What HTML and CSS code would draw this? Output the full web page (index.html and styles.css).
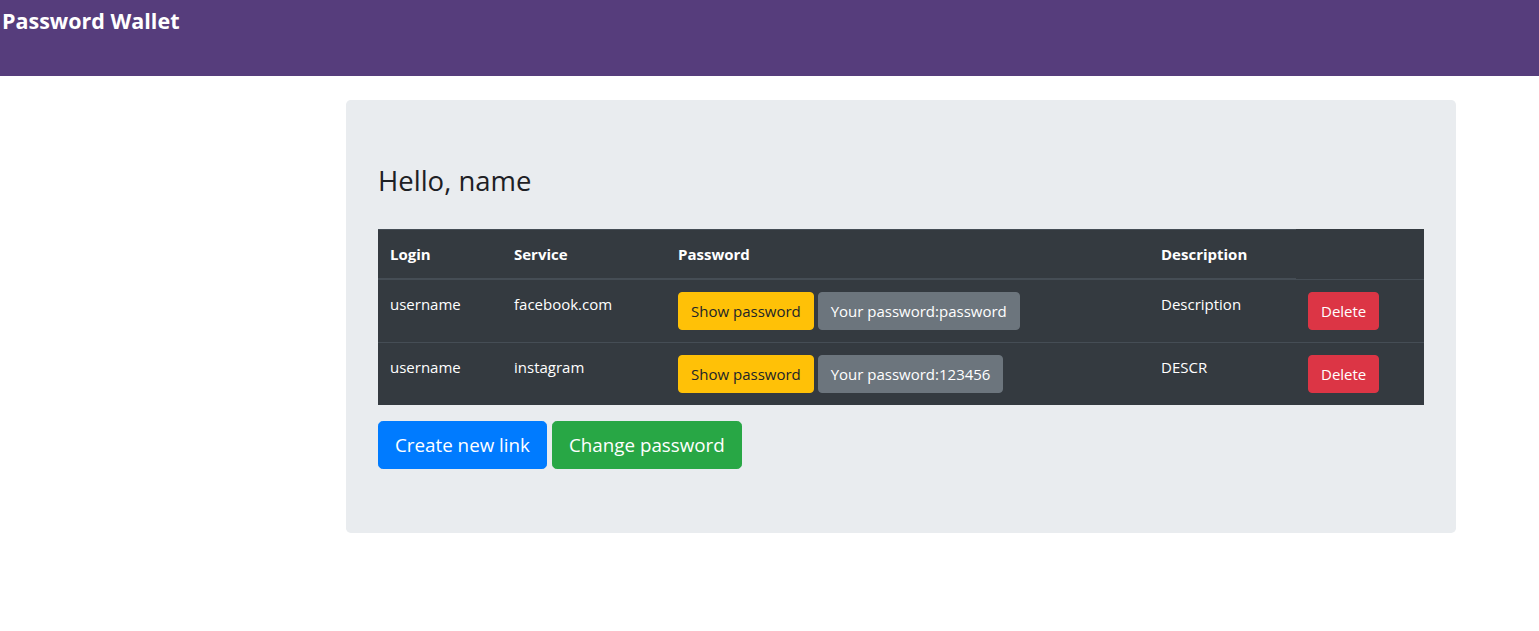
FILE: index.html
```html
<!DOCTYPE html>
<html lang="en">
<head>
<meta charset="utf-8">
<title>Password Wallet</title>
<link rel="stylesheet" href="styles.css">
</head>
<body>
<header class="topbar">
  <h4 class="brand">Password Wallet</h4>
</header>
<main class="main">
  <section class="jumbotron">
    <h3 class="hello">Hello, name</h3>
    <table class="wallet">
      <thead>
        <tr>
          <th class="c-login">Login</th>
          <th class="c-service">Service</th>
          <th class="c-pass">Password</th>
          <th class="c-desc">Description</th>
        </tr>
      </thead>
      <tbody>
        <tr>
          <td>username</td>
          <td>facebook.com</td>
          <td><button class="btn btn-warning">Show password</button> <button class="btn btn-secondary">Your password:password</button></td>
          <td>Description</td>
          <td><button class="btn btn-danger">Delete</button></td>
        </tr>
        <tr>
          <td>username</td>
          <td>instagram</td>
          <td><button class="btn btn-warning">Show password</button> <button class="btn btn-secondary">Your password:123456</button></td>
          <td>DESCR</td>
          <td><button class="btn btn-danger">Delete</button></td>
        </tr>
      </tbody>
    </table>
    <div class="actions">
      <button class="btn btn-lg btn-primary">Create new link</button>
      <button class="btn btn-lg btn-success">Change password</button>
    </div>
  </section>
</main>
</body>
</html>
```
FILE: styles.css
```css
* { box-sizing: border-box; }
body {
  margin: 0;
  font-family: "Open Sans", "Noto Sans", sans-serif;
  font-size: 16px;
  line-height: 1.5;
  color: #212529;
  background: #fff;
}
.topbar {
  height: 76px;
  background: #563d7c;
  padding-left: 2px;
}
.brand {
  margin: 0;
  color: #fff;
  font-size: 21.5px;
  font-weight: 700;
  line-height: 41px;
}
.main {
  padding: 24px 0 0 346px;
}
.jumbotron {
  width: 1110px;
  background: #e9ecef;
  border-radius: 4.8px;
  padding: 64px 32px;
}
.hello {
  margin: 0 0 31px;
  font-size: 27.5px;
  font-weight: 500;
  line-height: 34px;
  color: #1d2024;
}
.wallet {
  width: 100%;
  border-collapse: collapse;
  background: #343a40;
  color: #fff;
  margin-bottom: 16px;
}
.wallet th, .wallet td {
  padding: 12px;
  text-align: left;
  vertical-align: top;
  border-top: 1px solid #454d55;
  font-size: 15px;
  line-height: 24px;
}
.wallet thead th {
  vertical-align: bottom;
  border-bottom: 2px solid #454d55;
  font-weight: 700;
}
.c-login { width: 124px; }
.c-service { width: 164px; }
.c-pass { width: 483px; }
.c-desc { width: 147px; }
.btn {
  display: inline-block;
  font-family: inherit;
  font-size: 15px;
  line-height: 24px;
  padding: 6px 12px;
  border: 1px solid transparent;
  border-radius: 4px;
  color: #fff;
  cursor: pointer;
  vertical-align: middle;
}
.btn-warning { background: #ffc107; border-color: #ffc107; color: #212529; }
.btn-secondary { background: #6c757d; border-color: #6c757d; }
.btn-danger { background: #dc3545; border-color: #dc3545; }
.btn-primary { background: #007bff; border-color: #007bff; }
.btn-success { background: #28a745; border-color: #28a745; }
.btn-lg {
  font-size: 18.8px;
  line-height: 30px;
  padding: 8px 16px;
  border-radius: 4.8px;
}
.actions {
  display: flex;
  gap: 5px;
}
```
